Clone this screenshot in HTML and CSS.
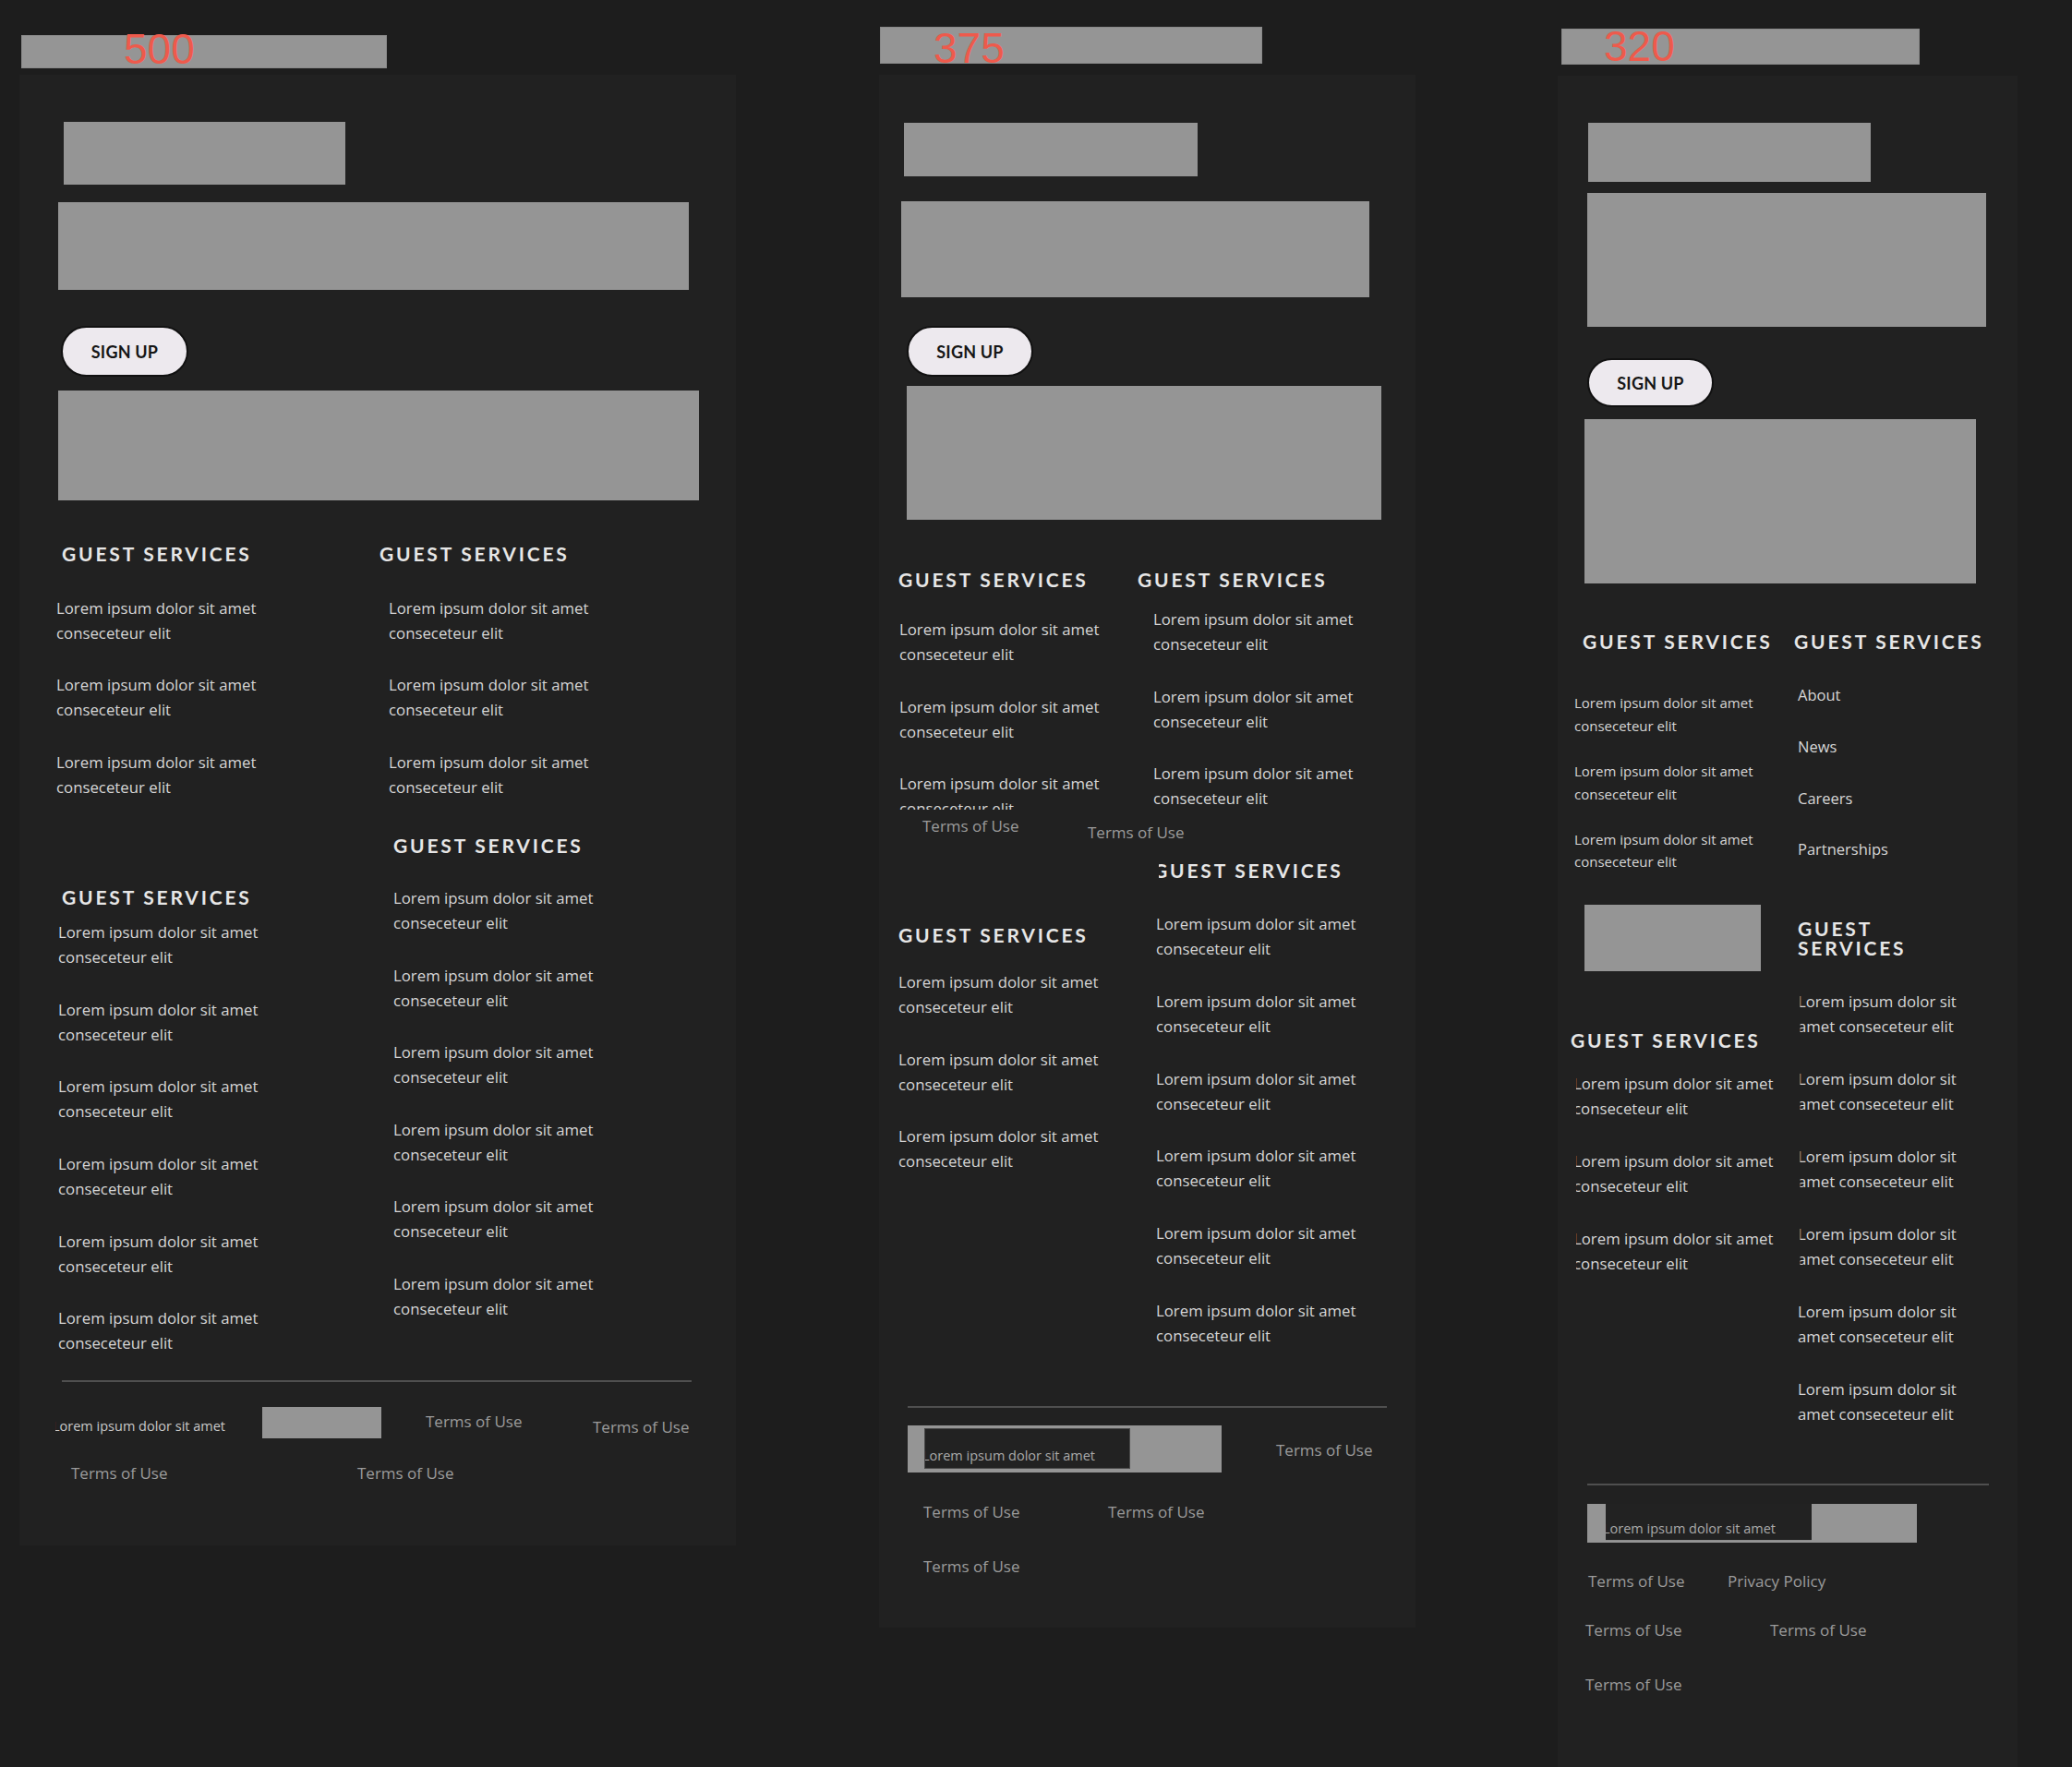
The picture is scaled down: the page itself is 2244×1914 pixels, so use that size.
FILE: index.html
```html
<!DOCTYPE html>
<html lang="en">
<head>
<meta charset="utf-8">
<title>Footer breakpoints 500 / 375 / 320</title>
<link rel="stylesheet" href="styles.css">
</head>
<body>
<main class="canvas">

  <!-- 500 -->
  <section class="frame frame-500">
    <div class="tag tag-500"><span class="tag-num">500</span></div>
    <div class="panel panel-500">
      <div class="ph p1-a"></div>
      <div class="ph p1-b"></div>
      <button class="signup p1-btn">SIGN UP</button>
      <div class="ph p1-c"></div>
      <div class="cols p1-cols">
        <div class="col">
          <h3 class="gs p1-h1">GUEST SERVICES</h3>
          <ul class="list p1-l1">
            <li>Lorem ipsum dolor sit amet conseceteur elit</li>
            <li>Lorem ipsum dolor sit amet conseceteur elit</li>
            <li>Lorem ipsum dolor sit amet conseceteur elit</li>
          </ul>
          <h3 class="gs p1-h2">GUEST SERVICES</h3>
          <ul class="list p1-l2">
            <li>Lorem ipsum dolor sit amet conseceteur elit</li>
            <li>Lorem ipsum dolor sit amet conseceteur elit</li>
            <li>Lorem ipsum dolor sit amet conseceteur elit</li>
            <li>Lorem ipsum dolor sit amet conseceteur elit</li>
            <li>Lorem ipsum dolor sit amet conseceteur elit</li>
            <li>Lorem ipsum dolor sit amet conseceteur elit</li>
          </ul>
        </div>
        <div class="col">
          <h3 class="gs p1-h3">GUEST SERVICES</h3>
          <ul class="list p1-l3">
            <li>Lorem ipsum dolor sit amet conseceteur elit</li>
            <li>Lorem ipsum dolor sit amet conseceteur elit</li>
            <li>Lorem ipsum dolor sit amet conseceteur elit</li>
          </ul>
          <h3 class="gs p1-h4">GUEST SERVICES</h3>
          <ul class="list p1-l4">
            <li>Lorem ipsum dolor sit amet conseceteur elit</li>
            <li>Lorem ipsum dolor sit amet conseceteur elit</li>
            <li>Lorem ipsum dolor sit amet conseceteur elit</li>
            <li>Lorem ipsum dolor sit amet conseceteur elit</li>
            <li>Lorem ipsum dolor sit amet conseceteur elit</li>
            <li>Lorem ipsum dolor sit amet conseceteur elit</li>
          </ul>
        </div>
      </div>
      <hr class="divider p1-div">
      <div class="frow p1-r1">
        <span class="fsmall p1-small">Lorem ipsum dolor sit amet</span>
        <div class="ph p1-d"></div>
        <a class="term p1-t1">Terms of Use</a>
        <a class="term p1-t2">Terms of Use</a>
      </div>
      <div class="frow p1-r2">
        <a class="term p1-t3">Terms of Use</a>
        <a class="term">Terms of Use</a>
      </div>
    </div>
  </section>

  <!-- 375 -->
  <section class="frame frame-375">
    <div class="tag tag-375"><span class="tag-num">375</span></div>
    <div class="panel panel-375">
      <div class="ph p2-a"></div>
      <div class="ph p2-b"></div>
      <button class="signup p2-btn">SIGN UP</button>
      <div class="ph p2-c"></div>
      <div class="cols p2-cols">
        <div class="col">
          <h3 class="gs">GUEST SERVICES</h3>
          <ul class="list p2-l1">
            <li>Lorem ipsum dolor sit amet conseceteur elit</li>
            <li>Lorem ipsum dolor sit amet conseceteur elit</li>
            <li class="cut">Lorem ipsum dolor sit amet conseceteur elit</li>
          </ul>
          <div class="frow p2-trow">
            <a class="term p2-ta">Terms of Use</a>
            <a class="term p2-tb">Terms of Use</a>
          </div>
          <h3 class="gs p2-h2">GUEST SERVICES</h3>
          <ul class="list p2-l2">
            <li>Lorem ipsum dolor sit amet conseceteur elit</li>
            <li>Lorem ipsum dolor sit amet conseceteur elit</li>
            <li>Lorem ipsum dolor sit amet conseceteur elit</li>
          </ul>
        </div>
        <div class="col">
          <h3 class="gs">GUEST SERVICES</h3>
          <ul class="list p2-l3">
            <li>Lorem ipsum dolor sit amet conseceteur elit</li>
            <li>Lorem ipsum dolor sit amet conseceteur elit</li>
            <li>Lorem ipsum dolor sit amet conseceteur elit</li>
          </ul>
          <h3 class="gs p2-h4">GUEST SERVICES</h3>
          <ul class="list p2-l4">
            <li>Lorem ipsum dolor sit amet conseceteur elit</li>
            <li>Lorem ipsum dolor sit amet conseceteur elit</li>
            <li>Lorem ipsum dolor sit amet conseceteur elit</li>
            <li>Lorem ipsum dolor sit amet conseceteur elit</li>
            <li>Lorem ipsum dolor sit amet conseceteur elit</li>
            <li>Lorem ipsum dolor sit amet conseceteur elit</li>
          </ul>
        </div>
      </div>
      <hr class="divider p2-div">
      <div class="frow p2-r1">
        <div class="fbox p2-box">
          <div class="fbox-in p2-box-in"><span class="fsmall">Lorem ipsum dolor sit amet</span></div>
        </div>
        <a class="term p2-t1">Terms of Use</a>
      </div>
      <div class="frow p2-r2">
        <a class="term p2-tw">Terms of Use</a>
        <a class="term">Terms of Use</a>
      </div>
      <div class="frow p2-r3">
        <a class="term">Terms of Use</a>
      </div>
    </div>
  </section>

  <!-- 320 -->
  <section class="frame frame-320">
    <div class="tag tag-320"><span class="tag-num">320</span></div>
    <div class="panel panel-320">
      <div class="ph p3-a"></div>
      <div class="ph p3-b"></div>
      <button class="signup p3-btn">SIGN UP</button>
      <div class="ph p3-c"></div>
      <div class="cols p3-cols">
        <div class="col">
          <h3 class="gs p3-h1">GUEST SERVICES</h3>
          <ul class="list list-sm p3-l1">
            <li>Lorem ipsum dolor sit amet conseceteur elit</li>
            <li>Lorem ipsum dolor sit amet conseceteur elit</li>
            <li>Lorem ipsum dolor sit amet conseceteur elit</li>
          </ul>
          <div class="ph p3-d"></div>
          <h3 class="gs p3-h3">GUEST SERVICES</h3>
          <ul class="list p3-l3">
            <li class="clip">Lorem ipsum dolor sit amet conseceteur elit</li>
            <li class="clip">Lorem ipsum dolor sit amet conseceteur elit</li>
            <li class="clip">Lorem ipsum dolor sit amet conseceteur elit</li>
          </ul>
        </div>
        <div class="col">
          <h3 class="gs p3-h2">GUEST SERVICES</h3>
          <ul class="links p3-links">
            <li>About</li>
            <li>News</li>
            <li>Careers</li>
            <li>Partnerships</li>
          </ul>
          <h3 class="gs p3-h4">GUEST SERVICES</h3>
          <ul class="list p3-l4">
            <li class="clip">Lorem ipsum dolor sit amet conseceteur elit</li>
            <li class="clip">Lorem ipsum dolor sit amet conseceteur elit</li>
            <li class="clip">Lorem ipsum dolor sit amet conseceteur elit</li>
            <li class="clip">Lorem ipsum dolor sit amet conseceteur elit</li>
            <li>Lorem ipsum dolor sit amet conseceteur elit</li>
            <li>Lorem ipsum dolor sit amet conseceteur elit</li>
          </ul>
        </div>
      </div>
      <hr class="divider p3-div">
      <div class="frow p3-r1">
        <div class="fbox p3-box">
          <div class="fbox-in p3-box-in"><span class="fsmall">Lorem ipsum dolor sit amet</span></div>
        </div>
      </div>
      <div class="frow p3-r2">
        <a class="term p3-tw1">Terms of Use</a>
        <a class="term">Privacy Policy</a>
      </div>
      <div class="frow p3-r3">
        <a class="term p3-tw2">Terms of Use</a>
        <a class="term">Terms of Use</a>
      </div>
      <div class="frow p3-r4">
        <a class="term">Terms of Use</a>
      </div>
    </div>
  </section>

</main>
</body>
</html>
```

FILE: styles.css
```css
* { box-sizing: border-box; }

html, body {
  margin: 0;
  padding: 0;
  background: #1d1d1d;
}

body {
  width: 2244px;
  height: 1914px;
  overflow: hidden;
  font-family: "Open Sans", "Liberation Sans", sans-serif;
  color: #d2d2d2;
}

/* ---------- canvas & frames ---------- */
.canvas {
  display: flex;
  align-items: flex-start;
  padding-left: 21px;
}

.frame { display: flex; flex-direction: column; align-items: flex-start; flex: 0 0 auto; }
.frame-500 { width: 776px; padding-top: 37.5px; }
.frame-375 { width: 581px; margin-left: 155px; padding-top: 29px; }
.frame-320 { width: 498px; margin-left: 154px; padding-top: 31px; }

.tag {
  display: flex;
  align-items: flex-start;
  background: #959595;
  border: 1px solid #8a8a8a;
}
.tag-num {
  font-family: "Liberation Sans", Arial, sans-serif;
  font-size: 46px;
  line-height: 46px;
  color: #ee5a4c;
}
.tag-500 { width: 396px; height: 36.5px; margin-left: 2px; margin-bottom: 7px; }
.tag-500 .tag-num { margin-left: 110px; margin-top: -9px; }
.tag-375 { width: 414px; height: 39.5px; margin-left: 1px; margin-bottom: 12.5px; }
.tag-375 .tag-num { margin-left: 57px; margin-top: -1px; }
.tag-320 { width: 388px; height: 39px; margin-left: 4px; margin-bottom: 12px; }
.tag-320 .tag-num { margin-left: 45px; margin-top: -5px; }

.panel {
  display: flex;
  flex-direction: column;
  align-items: flex-start;
  background: #212121;
  width: 100%;
}
.panel-500 { height: 1593px; }
.panel-375 { height: 1682px; }
.panel-320 { height: 1832px; }

/* ---------- common pieces ---------- */
.ph { background: #959595; flex: 0 0 auto; }

.signup {
  display: flex;
  align-items: center;
  justify-content: center;
  margin: 0;
  padding: 0;
  border: 2px solid #111;
  border-radius: 28px;
  background: #ede9ee;
  color: #161616;
  font-family: Lato, "Open Sans", sans-serif;
  font-weight: 700;
  font-size: 18px;
  letter-spacing: 0.2px;
}

.cols { display: grid; }
.col { display: flex; flex-direction: column; align-items: flex-start; }

.gs {
  margin: 0;
  font-family: Lato, "Open Sans", sans-serif;
  font-weight: 700;
  font-size: 21px;
  line-height: 24px;
  letter-spacing: 2.8px;
  color: #e6e6e6;
  white-space: nowrap;
}

.list {
  list-style: none;
  margin: 0;
  padding: 0;
  display: flex;
  flex-direction: column;
  gap: 29.6px;
}
.list li {
  width: 244px;
  font-size: 16.8px;
  line-height: 27px;
  color: #d6d6d6;
}
.list li.cut { height: 41.5px; overflow: hidden; }
.list li.clip { clip-path: inset(0 0 0 3px); }

.list-sm { gap: 24.5px; }
.list-sm li { width: 224px; font-size: 15px; line-height: 24.6px; }

.links {
  list-style: none;
  margin: 0;
  padding: 0;
  display: flex;
  flex-direction: column;
  gap: 35.8px;
}
.links li { font-size: 16.5px; line-height: 20px; color: #d6d6d6; }

.divider {
  margin: 0;
  border: 0;
  height: 2px;
  background: #4f4f4f;
}

.frow { display: flex; align-items: flex-start; }

.term {
  font-size: 17px;
  line-height: 20px;
  color: #9b9b9b;
  white-space: nowrap;
  flex: 0 0 auto;
}

.fsmall {
  font-size: 14.5px;
  line-height: 18px;
  color: #c8c8c8;
  white-space: nowrap;
}

.fbox { display: flex; align-items: flex-start; background: #959595; flex: 0 0 auto; }
.fbox-in { background: #222; overflow: hidden; flex: 0 0 auto; }
.fbox-in .fsmall { display: block; margin-left: -3px; color: #a9a9a9; }

/* ---------- 500 panel ---------- */
.p1-a { margin: 51px 0 0 48px; width: 305px; height: 68px; }
.p1-b { margin: 19px 0 0 42px; width: 683px; height: 95px; }
.p1-btn { margin: 39px 0 0 45px; width: 138px; height: 55px; }
.p1-c { margin: 15px 0 0 42px; width: 694px; height: 119px; }

.p1-cols { margin: 46px 0 0 39px; grid-template-columns: 351px 330px; }
.p1-h1 { margin-left: 7px; }
.p1-l1 { margin: 32.6px 0 0 1px; }
.p1-h2 { margin: 94.7px 0 0 7px; }
.p1-l2 { margin: 11.8px 0 0 3px; }
.p1-h3 { margin-left: 0; }
.p1-l3 { margin: 32.6px 0 0 10px; }
.p1-h4 { margin: 38.2px 0 0 15px; }
.p1-l4 { margin: 31px 0 0 15px; }

.p1-div { margin: 26.7px 0 0 46px; width: 682px; }
.p1-r1 { margin: 27px 0 0 36px; }
.p1-small { display: block; width: 227px; margin-top: 11.6px; clip-path: inset(0 0 0 3px); }
.p1-d { width: 129px; height: 34px; }
.p1-t1 { width: 181px; margin: 6.5px 0 0 48px; }
.p1-t2 { margin-top: 12.5px; }
.p1-r2 { margin: 28.5px 0 0 56px; }
.p1-t3 { width: 310px; }

/* ---------- 375 panel ---------- */
.p2-a { margin: 52px 0 0 27px; width: 318px; height: 58px; }
.p2-b { margin: 27px 0 0 24px; width: 507px; height: 104px; }
.p2-btn { margin: 31px 0 0 30px; width: 137px; height: 55px; }
.p2-c { margin: 10px 0 0 30px; width: 514px; height: 145px; }

.p2-cols { margin: 53px 0 0 21px; grid-template-columns: 259px 290px; }
.p2-l1 { margin: 28px 0 0 1px; gap: 29.5px; }
.p2-trow { margin: 8.5px 0 0 26px; }
.p2-ta { width: 179px; }
.p2-tb { margin-top: 6.5px; }
.p2-h2 { margin-top: 89.5px; }
.p2-l2 { margin-top: 25px; gap: 29.5px; }
.p2-l3 { margin: 17px 0 0 17px; gap: 29.7px; }
.p2-h4 { margin: 53px 0 0 17px; clip-path: inset(0 0 0 6px); }
.p2-l4 { margin: 32px 0 0 20px; gap: 29.7px; }

.p2-div { margin: 63.1px 0 0 31px; width: 519px; }
.p2-r1 { margin: 19px 0 0 31px; }
.p2-box { width: 340px; height: 51px; }
.p2-box-in { width: 223px; height: 44px; margin: 3px 0 0 18px; border: 1px solid #4a4a4a; padding-top: 20px; }
.p2-t1 { margin: 17px 0 0 59px; }
.p2-r2 { margin: 33.5px 0 0 48px; }
.p2-tw { width: 200px; }
.p2-r3 { margin: 39px 0 0 48px; }

/* ---------- 320 panel ---------- */
.p3-a { margin: 51px 0 0 33px; width: 306px; height: 64px; }
.p3-b { margin: 12px 0 0 32px; width: 432px; height: 145px; }
.p3-btn { margin: 34px 0 0 32px; width: 137px; height: 53px; }
.p3-c { margin: 13px 0 0 29px; width: 424px; height: 178px; }

.p3-cols { margin: 51px 0 0 13px; grid-template-columns: 242px 243px; }
.p3-h1 { margin-left: 14px; }
.p3-l1 { margin: 42.3px 0 0 5px; }
.p3-d { margin: 34.1px 0 0 16px; width: 191px; height: 72px; }
.p3-h3 { margin: 63.5px 0 0 1px; }
.p3-l3 { margin: 21px 0 0 4px; gap: 30px; }

.p3-h2 { margin-left: 1px; }
.p3-links { margin: 36px 0 0 5px; }
.p3-h4 { margin: 65px 0 0 5px; width: 150px; white-space: normal; line-height: 21px; }
.p3-l4 { margin: 33.6px 0 0 5px; gap: 30px; }
.p3-l4 li { width: 192px; }
.p3-l4 li.clip { clip-path: inset(0 0 0 2.5px); }

.p3-div { margin: 62px 0 0 32px; width: 435px; }
.p3-r1 { margin: 20px 0 0 32px; }
.p3-box { width: 357px; height: 42px; }
.p3-box-in { width: 223px; height: 40px; margin-left: 20px; border-bottom: 1px solid #8d8d8d; padding-top: 18px; }
.p3-r2 { margin: 32px 0 0 33px; }
.p3-tw1 { width: 151px; }
.p3-r3 { margin: 33px 0 0 30px; }
.p3-tw2 { width: 200px; }
.p3-r4 { margin: 39px 0 0 30px; }
```
